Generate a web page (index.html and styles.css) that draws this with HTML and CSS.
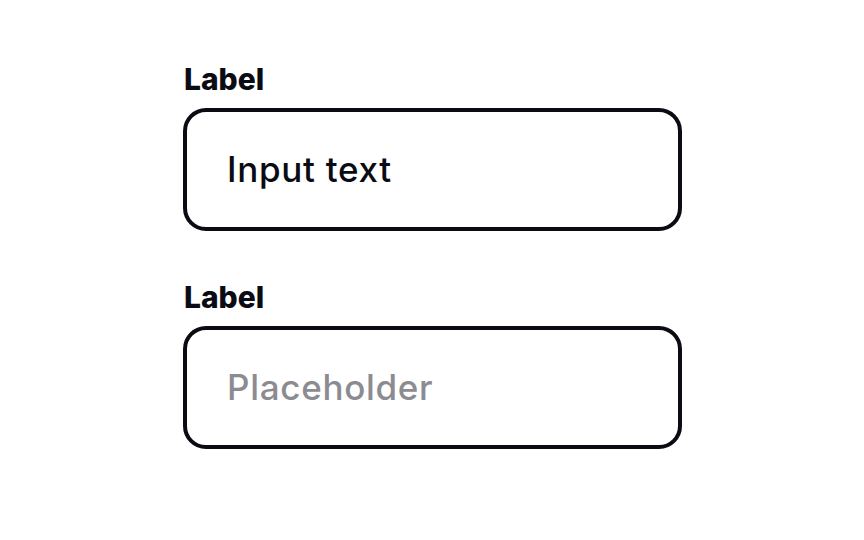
FILE: index.html
```html
<!DOCTYPE html>
<html>
<head>
<meta charset="utf-8">
<link rel="stylesheet" href="styles.css">
</head>
<body>
<div class="form">
  <div class="field">
    <label class="label">Label</label>
    <div class="input"><span class="value">Input text</span></div>
  </div>
  <div class="field">
    <label class="label">Label</label>
    <div class="input"><span class="placeholder">Placeholder</span></div>
  </div>
</div>
</body>
</html>
```
FILE: styles.css
```css
html, body {
  margin: 0;
  padding: 0;
  background: #ffffff;
  font-family: "Inter", "Noto Sans", sans-serif;
  color: #0b0b14;
}
.form {
  display: flex;
  flex-direction: column;
  gap: 48px;
  padding: 61px 0 0 183px;
}
.field {
  display: flex;
  flex-direction: column;
  gap: 11px;
}
.label {
  font-size: 30px;
  font-weight: 800;
  line-height: 36px;
  padding-left: 1px;
}
.input {
  box-sizing: border-box;
  width: 499px;
  height: 123px;
  border: 4px solid #0b0b14;
  border-radius: 23px;
  display: flex;
  align-items: center;
  padding-left: 40px;
  padding-bottom: 1px;
  font-size: 35px;
  font-weight: 450;
  letter-spacing: 0.7px;
}
.placeholder {
  color: #8b8b91;
}
```
